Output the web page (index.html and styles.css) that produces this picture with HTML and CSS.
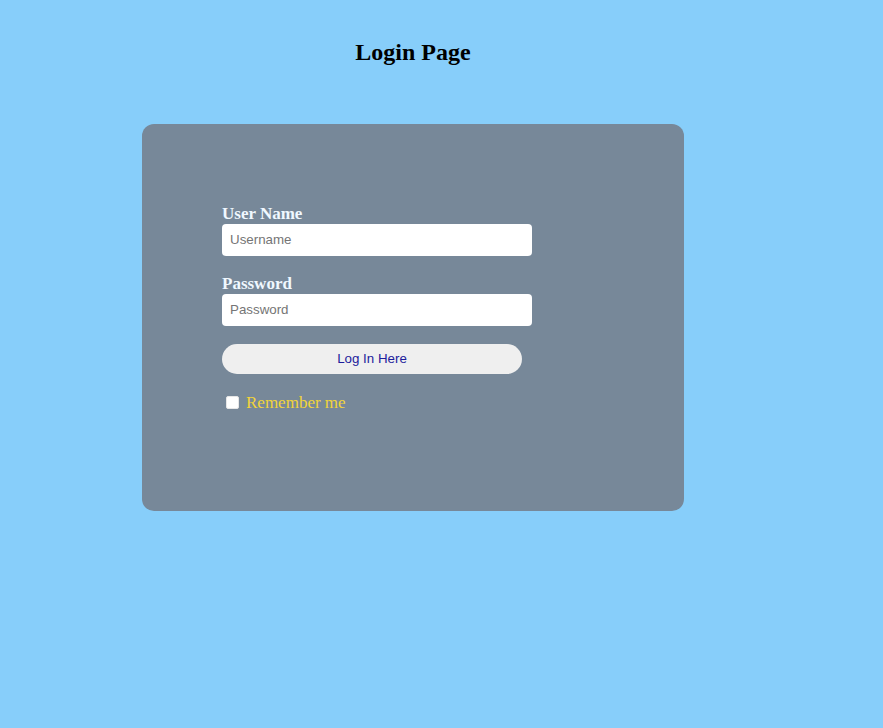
FILE: index.html
```html
<!DOCTYPE html>
<html>
<head>
<meta charset="utf-8">
<title>Login Page</title>
<link rel="stylesheet" href="styles.css">
</head>
<body>
<div class="wrap">
  <h2 class="title">Login Page</h2>
  <form class="card">
    <label class="field-label" for="user">User Name</label>
    <input class="field" id="user" type="text" placeholder="Username">
    <label class="field-label second" for="pass">Password</label>
    <input class="field" id="pass" type="password" placeholder="Password">
    <button class="btn" type="button">Log In Here</button>
    <div class="remember">
      <input class="check" id="rem" type="checkbox">
      <label class="remember-label" for="rem">Remember me</label>
    </div>
  </form>
</div>
</body>
</html>
```
FILE: styles.css
```css
html, body {
  margin: 0;
  padding: 0;
}
body {
  background: #87cefa;
  font-family: "Liberation Serif", "Times New Roman", serif;
  min-height: 728px;
}
.wrap {
  margin-left: 142px;
  width: 542px;
  padding-top: 38px;
}
.title {
  margin: 0;
  font-size: 24px;
  font-weight: bold;
  line-height: 28px;
  text-align: center;
  color: #000;
}
.card {
  margin-top: 58px;
  height: 387px;
  box-sizing: border-box;
  background: #778899;
  border-radius: 12px;
  padding: 80px 0 0 80px;
  display: flex;
  flex-direction: column;
  align-items: flex-start;
}
.field-label {
  display: block;
  font-size: 17px;
  font-weight: bold;
  line-height: 20px;
  color: #f0f8ff;
}
.field-label.second {
  margin-top: 18px;
}
.field {
  width: 310px;
  height: 32px;
  box-sizing: border-box;
  border: none;
  border-radius: 4px;
  background: #fff;
  padding: 0 8px 2px;
  margin: 0;
  font-family: "Liberation Sans", Arial, sans-serif;
  font-size: 13.333px;
  outline: none;
}
.field::placeholder {
  color: #757575;
}
.btn {
  margin-top: 18px;
  width: 300px;
  height: 30px;
  border: none;
  border-radius: 15px;
  background: #efefef;
  color: #1c1c9c;
  font-family: "Liberation Sans", Arial, sans-serif;
  font-size: 13.333px;
  padding: 0 0 2px;
}
.remember {
  margin-top: 19px;
  display: flex;
  align-items: flex-start;
}
.check {
  -webkit-appearance: none;
  appearance: none;
  box-sizing: border-box;
  width: 13px;
  height: 13px;
  margin: 3px 0 0 4px;
  background: #fff;
  border: 1px solid #e6e6e6;
  border-radius: 2px;
}
.remember-label {
  margin-left: 7px;
  font-size: 17px;
  line-height: 20px;
  color: #f2d43a;
}
```
